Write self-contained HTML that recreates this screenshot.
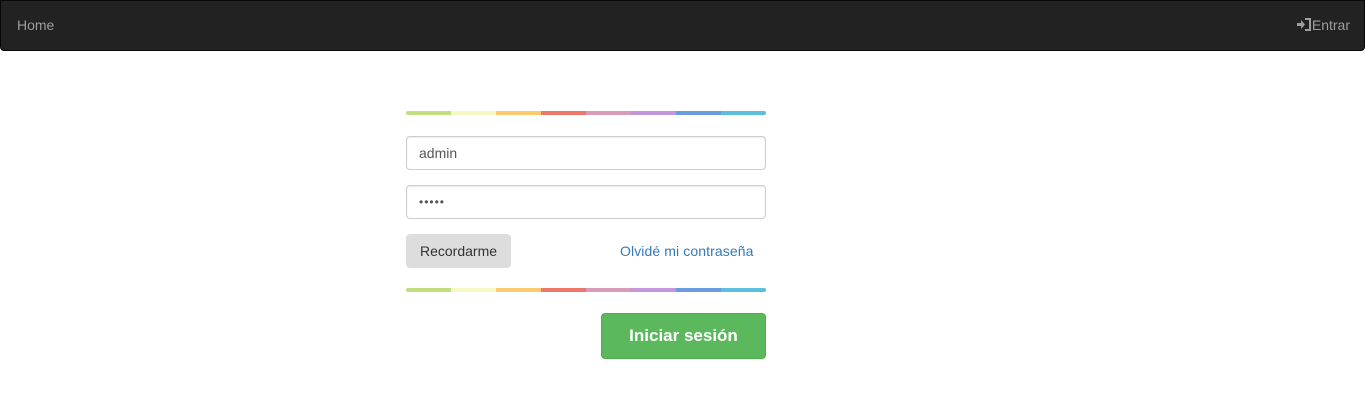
<!DOCTYPE html>
<html><head><meta charset="utf-8"><style>
body{margin:0;background:#fff;font-family:"Liberation Sans",sans-serif;font-size:14px;width:1365px;height:406px;overflow:hidden;position:relative}
.nav{position:absolute;left:0;top:0;width:1363px;height:49px;background:#222;border:1px solid #080808;border-radius:0 0 4px 4px}
.nav .home{position:absolute;left:16px;top:16px;color:#9d9d9d}
.nav .ent{position:absolute;right:14px;top:16px;color:#9d9d9d}
.stripe{position:absolute;left:406px;width:360px;height:4px;display:flex;border-radius:2px;overflow:hidden}
.stripe i{flex:1}
.inp{position:absolute;left:406px;width:358px;height:32px;border:1px solid #ccc;border-radius:4px;box-shadow:inset 0 1px 1px rgba(0,0,0,.075);color:#555;line-height:32px;text-indent:12px}
.btn{position:absolute;border-radius:4px}
</style></head><body>
<div class="nav"><span class="home">Home</span><span class="ent"><svg width="15" height="13" viewBox="0 0 15 13" style="vertical-align:-1px"><path d="M0 5h4V2l4 4.5-4 4.5V8H0z" fill="#9d9d9d"/><path d="M8 1h5v11H8" fill="none" stroke="#9d9d9d" stroke-width="2"/></svg>Entrar</span></div>
<div class="stripe" style="top:111px"><i style="background:#c2df7e"></i><i style="background:#f5f9c3"></i><i style="background:#fbcb6e"></i><i style="background:#ee7769"></i><i style="background:#d99bbc"></i><i style="background:#c497dc"></i><i style="background:#6a9ddf"></i><i style="background:#5bc0de"></i></div>
<div class="inp" style="top:136px">admin</div>
<div class="inp" style="top:185px;letter-spacing:1px;font-size:12px">•••••</div>
<div class="btn" style="left:406px;top:234px;width:105px;height:34px;background:#ddd;color:#333;line-height:34px;text-align:center">Recordarme</div>
<div style="position:absolute;left:620px;top:243px;color:#337ab7;letter-spacing:0.1px">Olvidé mi contraseña</div>
<div class="stripe" style="top:288px"><i style="background:#c2df7e"></i><i style="background:#f5f9c3"></i><i style="background:#fbcb6e"></i><i style="background:#ee7769"></i><i style="background:#d99bbc"></i><i style="background:#c497dc"></i><i style="background:#6a9ddf"></i><i style="background:#5bc0de"></i></div>
<div class="btn" style="left:601px;top:313px;width:163px;height:44px;background:#5cb85c;border:1px solid #4cae4c;color:#fff;font-size:17px;line-height:44px;text-align:center;font-weight:bold">Iniciar sesión</div>
</body></html>
